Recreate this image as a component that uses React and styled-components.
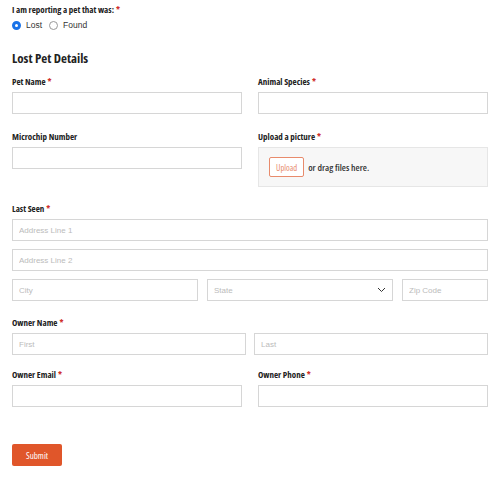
import React from "react";
import styled, { createGlobalStyle } from "styled-components";

const Global = createGlobalStyle`
  body {
    margin: 0;
    background: #fff;
    font-family: "Liberation Sans", Arial, sans-serif;
  }
`;

const cond = `
  font-family: "Open Sans", "DejaVu Sans Condensed", sans-serif;
  font-stretch: 75%;
`;

const Form = styled.form`
  width: 476px;
  padding: 3px 12px 12px;
`;

const Label = styled.div`
  ${cond}
  font-weight: 700;
  font-size: 9px;
  line-height: 14px;
  color: #222;
  margin-bottom: 3px;
`;

const Req = styled.span`
  color: #d0312d;
  margin-left: 2px;
`;

const Radios = styled.div`
  display: flex;
  align-items: center;
  gap: 7px;
  margin-top: 3px;
  font-size: 8.5px;
  color: #333;
`;

const RadioItem = styled.label`
  display: flex;
  align-items: center;
  gap: 5px;
`;

const Dot = styled.span`
  width: 9px;
  height: 9px;
  border-radius: 50%;
  box-sizing: border-box;
  border: ${p => (p.checked ? "3px solid #1a73e8" : "1px solid #999")};
  background: #fff;
`;

const Heading = styled.h2`
  ${cond}
  font-size: 13px;
  font-weight: 700;
  color: #222;
  margin: 19px 0 8px;
`;

const Row = styled.div`
  display: grid;
  grid-template-columns: ${p => p.cols || "1fr 1fr"};
  column-gap: ${p => p.gap || 16}px;
  align-items: start;
  margin-bottom: ${p => p.mb ?? 16}px;
`;

const Field = styled.div`
  display: flex;
  flex-direction: column;
`;

const Input = styled.input`
  box-sizing: border-box;
  height: 22px;
  width: 100%;
  border: 1px solid #d6d6d6;
  padding: 0 6px;
  font-family: "Liberation Sans", Arial, sans-serif;
  font-size: 8px;
  margin: 0 0 ${p => p.mb || 0}px;
  &::placeholder {
    color: #bbb;
  }
`;

const Select = styled.div`
  box-sizing: border-box;
  height: 22px;
  border: 1px solid #d6d6d6;
  padding: 0 6px;
  display: flex;
  align-items: center;
  justify-content: space-between;
  font-size: 8px;
  color: #bbb;
`;

const Drop = styled.div`
  box-sizing: border-box;
  height: 40px;
  border: 1px solid #e6e6e6;
  background: #f7f7f7;
  display: flex;
  align-items: center;
  gap: 4px;
  padding: 0 10px;
  ${cond}
  font-weight: 600;
  font-size: 9.5px;
  color: #333;
`;

const UploadBtn = styled.span`
  box-sizing: border-box;
  height: 20px;
  padding: 0 6px;
  border: 1px solid #e88b6c;
  border-radius: 2px;
  background: #fff;
  color: #e88b6c;
  display: flex;
  align-items: center;
  font-weight: 400;
  font-size: 8.5px;
`;

const Submit = styled.button`
  display: block;
  margin-top: 37px;
  width: 50px;
  height: 22px;
  border: none;
  border-radius: 2px;
  background: #e0562a;
  color: #fff;
  ${cond}
  font-size: 9px;
  padding: 0;
`;

const Chevron = () => (
  <svg width="9" height="6" viewBox="0 0 9 6">
    <path d="M1 1l3.5 3.5L8 1" fill="none" stroke="#333" strokeWidth="1" />
  </svg>
);

const L = ({ children, req }) => (
  <Label>
    {children}
    {req && <Req>*</Req>}
  </Label>
);

export default function App() {
  return (
    <>
      <Global />
      <Form>
        <L req>I am reporting a pet that was:</L>
        <Radios>
          <RadioItem>
            <Dot checked />
            Lost
          </RadioItem>
          <RadioItem>
            <Dot />
            Found
          </RadioItem>
        </Radios>

        <Heading>Lost Pet Details</Heading>

        <Row>
          <Field>
            <L req>Pet Name</L>
            <Input />
          </Field>
          <Field>
            <L req>Animal Species</L>
            <Input />
          </Field>
        </Row>

        <Row mb={15}>
          <Field>
            <L>Microchip Number</L>
            <Input />
          </Field>
          <Field>
            <L req>Upload a picture</L>
            <Drop>
              <UploadBtn>Upload</UploadBtn>
              or drag files here.
            </Drop>
          </Field>
        </Row>

        <Field>
          <L req>Last Seen</L>
          <Input placeholder="Address Line 1" mb={8} />
          <Input placeholder="Address Line 2" mb={8} />
        </Field>
        <Row cols="186px 1fr 86px" gap={9} mb={15}>
          <Input placeholder="City" />
          <Select>
            State
            <Chevron />
          </Select>
          <Input placeholder="Zip Code" />
        </Row>

        <L req>Owner Name</L>
        <Row gap={8} mb={13}>
          <Input placeholder="First" />
          <Input placeholder="Last" />
        </Row>

        <Row mb={0}>
          <Field>
            <L req>Owner Email</L>
            <Input />
          </Field>
          <Field>
            <L req>Owner Phone</L>
            <Input />
          </Field>
        </Row>

        <Submit type="button">Submit</Submit>
      </Form>
    </>
  );
}
